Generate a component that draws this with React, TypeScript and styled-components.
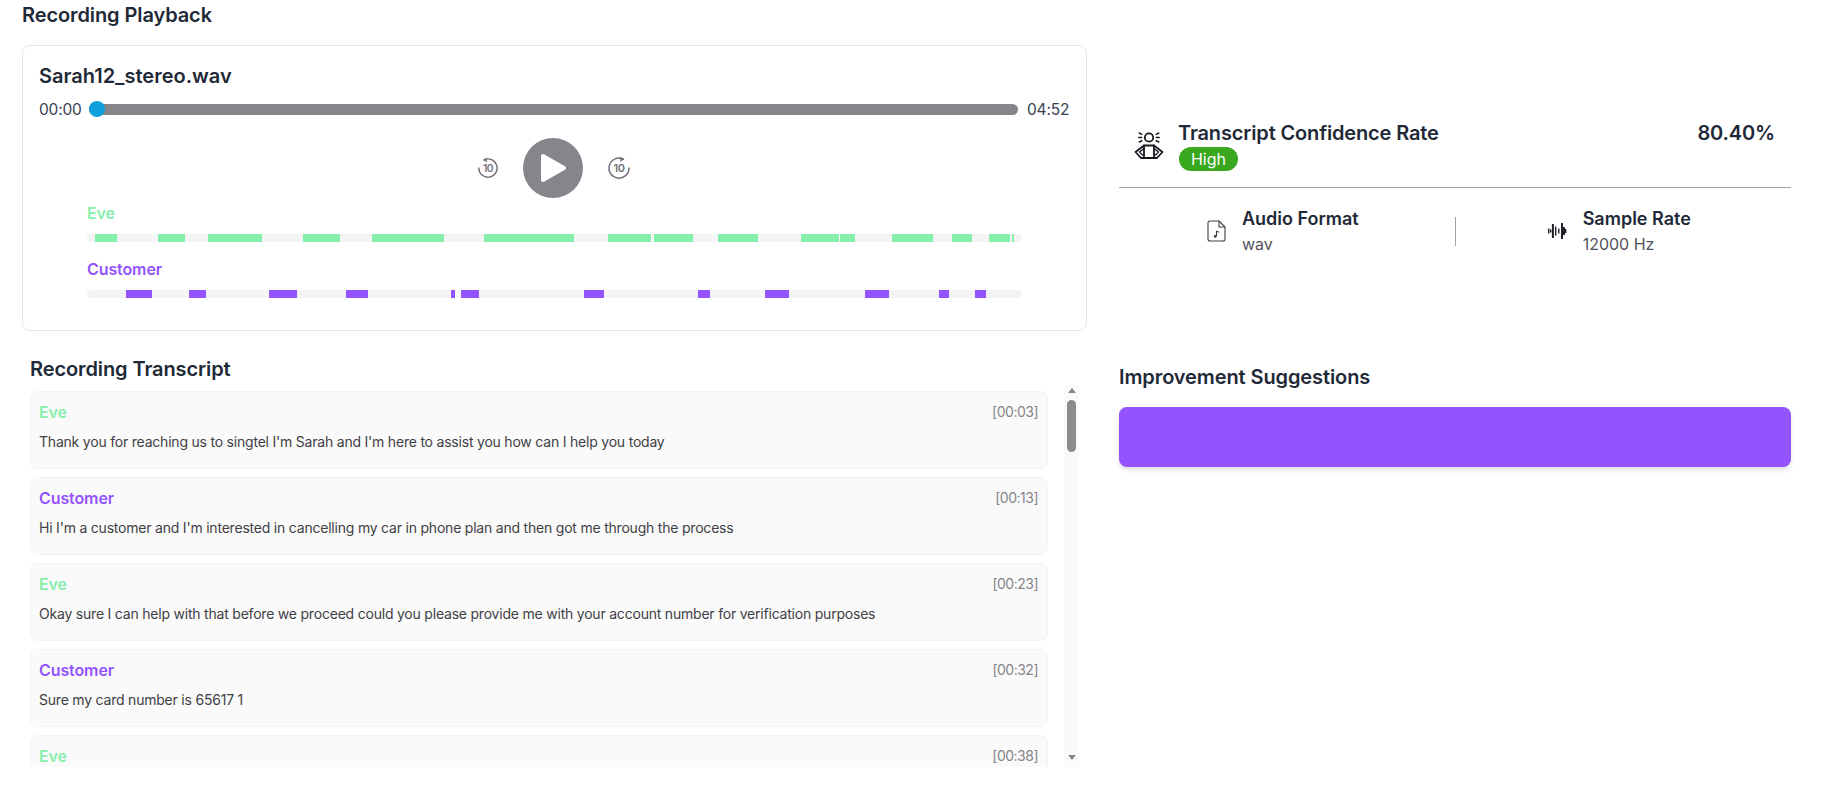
import styled, { createGlobalStyle } from "styled-components";

const TOTAL_START = 87;
const TRACK_WIDTH = 935;

// segments are in page pixels measured along the track, converted to % below
const eveSegments: [number, number][] = [
  [95, 117], [158, 185], [208, 262], [303, 340], [372, 444], [484, 574], [608, 651],
  [654, 693], [718, 758], [801, 839], [840, 855], [892, 933], [952, 972], [989, 1010], [1012, 1014],
];
const customerSegments: [number, number][] = [
  [126, 152], [189, 206], [269, 297], [346, 368], [451, 455], [461, 479],
  [584, 604], [698, 710], [765, 789], [865, 889], [939, 949], [975, 986],
];

type Speaker = "eve" | "customer";

const messages: { speaker: Speaker; time: string; text: string }[] = [
  { speaker: "eve", time: "[00:03]", text: "Thank you for reaching us to singtel I'm Sarah and I'm here to assist you how can I help you today" },
  { speaker: "customer", time: "[00:13]", text: "Hi I'm a customer and I'm interested in cancelling my car in phone plan and then got me through the process" },
  { speaker: "eve", time: "[00:23]", text: "Okay sure I can help with that before we proceed could you please provide me with your account number for verification purposes" },
  { speaker: "customer", time: "[00:32]", text: "Sure my card number is 65617 1" },
  { speaker: "eve", time: "[00:38]", text: "" },
];

const speakerColor = (s: Speaker) => (s === "eve" ? "#86efac" : "#9353ff");
const speakerName = (s: Speaker) => (s === "eve" ? "Eve" : "Customer");

const GlobalStyle = createGlobalStyle`
  html, body { margin: 0; padding: 0; background: #fff; }
  body { font-family: Inter, "Open Sans", sans-serif; color: #1f2937; }
  * { box-sizing: border-box; }
`;

const Page = styled.div`
  display: grid;
  grid-template-columns: 1065px 672px;
  column-gap: 32px;
  padding-left: 22px;
  height: 801px;
  overflow: hidden;
`;

const LeftColumn = styled.div`
  display: flex;
  flex-direction: column;
`;

const RightColumn = styled.div`
  display: flex;
  flex-direction: column;
  padding-top: 118px;
`;

const Heading = styled.h2`
  margin: 0;
  font-size: 20px;
  line-height: 30px;
  font-weight: 600;
  color: #1f2937;
  letter-spacing: -0.1px;
`;

const PlayerCard = styled.section`
  margin-top: 15px;
  height: 286px;
  padding: 16px 17px 16px 16px;
  border: 1px solid #e5e7eb;
  border-radius: 8px;
  background: #fff;
`;

const FileName = styled.div`
  font-size: 20px;
  line-height: 28px;
  font-weight: 600;
  color: #1f2937;
`;

const SeekRow = styled.div`
  display: flex;
  align-items: center;
  gap: 8px;
  margin-top: 8px;
  height: 22px;
  color: #374151;
`;

const Time = styled.span`
  width: 42px;
  white-space: nowrap;
  font-size: 15.5px;
  letter-spacing: -0.2px;
`;

const Slider = styled.div`
  position: relative;
  flex: 1;
  height: 11px;
  margin-right: 1px;
  background: #85858a;
  border-radius: 6px;
`;

const Thumb = styled.span`
  position: absolute;
  left: 0;
  top: -2.5px;
  width: 16px;
  height: 16px;
  border-radius: 50%;
  background: #0ea0dc;
`;

const Controls = styled.div`
  display: flex;
  justify-content: center;
  align-items: center;
  gap: 24px;
  margin-top: 18px;
  height: 60px;
`;

const SkipIcon = styled.svg<{ $size: number }>`
  width: ${(p) => p.$size}px;
  height: ${(p) => p.$size}px;
  display: block;
`;

const PlayButton = styled.button`
  width: 60px;
  height: 60px;
  padding: 0;
  border: 0;
  border-radius: 50%;
  background: #85868b;
  display: flex;
  align-items: center;
  justify-content: center;
`;

const Timelines = styled.div`
  margin: 3px 47px 0 48px;
`;

const TimelineLabel = styled.div<{ $speaker: Speaker }>`
  font-size: 16px;
  line-height: 24px;
  font-weight: 600;
  letter-spacing: -0.1px;
  color: ${(p) => speakerColor(p.$speaker)};
`;

const Track = styled.div`
  position: relative;
  height: 8px;
  margin: 9px 0 15px;
  background: #f4f4f5;
  border-radius: 4px;
  overflow: hidden;
`;

const Segment = styled.span<{ $speaker: Speaker }>`
  position: absolute;
  top: 0;
  bottom: 0;
  background: ${(p) => speakerColor(p.$speaker)};
`;

const TranscriptSection = styled.section`
  margin-top: 23px;
  padding: 0 8px;
  display: flex;
  flex-direction: column;
`;

const TranscriptBody = styled.div`
  display: flex;
  gap: 16px;
  height: 383px;
  overflow: hidden;
`;

const MessageList = styled.div`
  flex: 1;
  display: flex;
  flex-direction: column;
  gap: 8px;
  padding-top: 7px;
`;

const Message = styled.article`
  flex: none;
  height: 78px;
  padding: 8px 9px 16px 8px;
  background: #fafafa;
  border: 1px solid #f4f4f5;
  border-radius: 8px;
`;

const MessageHead = styled.div`
  display: flex;
  justify-content: space-between;
  align-items: center;
  height: 23px;
`;

const MessageSpeaker = styled.span<{ $speaker: Speaker }>`
  font-size: 16px;
  font-weight: 600;
  letter-spacing: -0.1px;
  color: ${(p) => speakerColor(p.$speaker)};
`;

const Stamp = styled.span`
  font-size: 14px;
  letter-spacing: -0.5px;
  color: #85858a;
`;

const MessageText = styled.p`
  margin: 9px 0 0;
  font-size: 14px;
  line-height: 20px;
  letter-spacing: -0.21px;
  color: #3f3f46;
`;

const ScrollRail = styled.div`
  flex: none;
  width: 15px;
  padding-top: 4px;
  background: #fafafa;
  display: flex;
  flex-direction: column;
  align-items: center;
`;

const ScrollArrow = styled.span<{ $down?: boolean }>`
  width: 0;
  height: 0;
  border-left: 4px solid transparent;
  border-right: 4px solid transparent;
  ${(p) => (p.$down ? "border-top: 5px solid #85858a; margin-top: auto; margin-bottom: 7px;" : "border-bottom: 5px solid #85858a;")}
`;

const ScrollThumb = styled.span`
  width: 9px;
  height: 52px;
  margin-top: 7px;
  border-radius: 5px;
  background: #8c8c8c;
`;

const ConfidenceRow = styled.div`
  display: flex;
  align-items: flex-start;
  gap: 14px;
  padding: 0 16px 16px 15px;
  border-bottom: 1px solid #a1a1aa;
`;

const ConfidenceIcon = styled.svg`
  flex: none;
  width: 30px;
  height: 30px;
  margin-top: 12px;
`;

const ConfidenceMain = styled.div`
  flex: 1;
`;

const ConfidenceTop = styled.div`
  display: flex;
  justify-content: space-between;
  height: 29px;
  align-items: center;
  font-size: 20px;
  font-weight: 600;
  letter-spacing: -0.15px;
  color: #1f2937;
`;

const Badge = styled.span`
  display: inline-block;
  height: 24px;
  width: 59px;
  margin-left: 1px;
  text-align: center;
  border-radius: 12px;
  background: #3aa81f;
  color: #fff;
  font-size: 16px;
  line-height: 24px;
`;

const InfoRow = styled.div`
  display: grid;
  grid-template-columns: 1fr 1px 1fr;
  align-items: center;
  padding-top: 18px;
`;

const InfoItem = styled.div`
  display: flex;
  justify-content: center;
  align-items: center;
  gap: 16px;
  padding-right: 8px;
`;

const InfoDivider = styled.span`
  width: 1px;
  height: 29px;
  background: #a1a1aa;
`;

const InfoIcon = styled.svg`
  flex: none;
  width: 19px;
  height: 22px;
`;

const InfoTitle = styled.div`
  font-size: 18px;
  line-height: 26px;
  font-weight: 600;
  color: #1f2937;
`;

const InfoValue = styled.div`
  font-size: 16px;
  line-height: 24px;
  color: #52525b;
`;

const SuggestionsHeading = styled(Heading)`
  margin-top: 106px;
`;

const SuggestionBanner = styled.div`
  margin-top: 15px;
  height: 60px;
  border-radius: 8px;
  background: #9353ff;
  box-shadow: 0 4px 6px -1px rgba(0, 0, 0, 0.1), 0 2px 4px -2px rgba(0, 0, 0, 0.1);
`;

function Skip({ size, forward }: { size: number; forward?: boolean }) {
  return (
    <SkipIcon $size={size} viewBox="0 0 24 24" fill="none" stroke="#6f6f75" strokeWidth="1.5">
      {forward ? (
        <>
          <path d="M16.5 3.2A10 10 0 1 0 22 12" strokeLinecap="round" />
          <path d="M13 1.2 16.8 3.2 13.4 5.4" fill="#6f6f75" strokeWidth="0.6" />
        </>
      ) : (
        <>
          <path d="M7.5 3.2A10 10 0 1 1 2 12" strokeLinecap="round" />
          <path d="M11 1.2 7.2 3.2 10.6 5.4" fill="#6f6f75" strokeWidth="0.6" />
        </>
      )}
      <text x="12" y="16" textAnchor="middle" fontSize="11" fontWeight="600" letterSpacing="-0.5" fontFamily="Inter, sans-serif" fill="#6f6f75" stroke="none">
        10
      </text>
    </SkipIcon>
  );
}

function Timeline({ speaker, segments }: { speaker: Speaker; segments: [number, number][] }) {
  return (
    <Track>
      {segments.map(([from, to]) => (
        <Segment
          key={from}
          $speaker={speaker}
          style={{
            left: `${((from - TOTAL_START) / TRACK_WIDTH) * 100}%`,
            width: `${((to - from) / TRACK_WIDTH) * 100}%`,
          }}
        />
      ))}
    </Track>
  );
}

export default function App() {
  return (
    <>
      <GlobalStyle />
      <Page>
        <LeftColumn>
          <Heading>Recording Playback</Heading>
          <PlayerCard>
            <FileName>Sarah12_stereo.wav</FileName>
            <SeekRow>
              <Time>00:00</Time>
              <Slider>
                <Thumb />
              </Slider>
              <Time>04:52</Time>
            </SeekRow>
            <Controls>
              <Skip size={22} />
              <PlayButton aria-label="Play">
                <svg width="30" height="32" viewBox="0 0 30 32">
                  <path d="M5 4 26 16 5 28Z" fill="#fff" stroke="#fff" strokeWidth="4" strokeLinejoin="round" />
                </svg>
              </PlayButton>
              <Skip size={24} forward />
            </Controls>
            <Timelines>
              <TimelineLabel $speaker="eve">Eve</TimelineLabel>
              <Timeline speaker="eve" segments={eveSegments} />
              <TimelineLabel $speaker="customer">Customer</TimelineLabel>
              <Timeline speaker="customer" segments={customerSegments} />
            </Timelines>
          </PlayerCard>

          <TranscriptSection>
            <Heading>Recording Transcript</Heading>
            <TranscriptBody>
              <MessageList>
                {messages.map((m) => (
                  <Message key={m.time}>
                    <MessageHead>
                      <MessageSpeaker $speaker={m.speaker}>{speakerName(m.speaker)}</MessageSpeaker>
                      <Stamp>{m.time}</Stamp>
                    </MessageHead>
                    {m.text && <MessageText>{m.text}</MessageText>}
                  </Message>
                ))}
              </MessageList>
              <ScrollRail>
                <ScrollArrow />
                <ScrollThumb />
                <ScrollArrow $down />
              </ScrollRail>
            </TranscriptBody>
          </TranscriptSection>
        </LeftColumn>

        <RightColumn>
          <ConfidenceRow>
            <ConfidenceIcon viewBox="0 0 30 30" fill="none" stroke="#15181d" strokeWidth="1.8" strokeLinecap="round" strokeLinejoin="round">
              <circle cx="15" cy="7.5" r="4.2" />
              <path d="M5.2 3 7.8 4.3M4.8 7.6H7.6M5.2 12 7.8 10.8M24.8 3 22.2 4.3M25.2 7.6H22.4M24.8 12 22.2 10.8" strokeWidth="1.5" />
              <path d="M10 28V15.5H20V28Z" />
              <path d="M10 15.5 1.5 22 7 28H10M20 15.5 28.5 22 23 28H20" />
              <path d="M10 18.5 5.5 22 8.5 25M20 18.5 24.5 22 21.5 25" strokeWidth="1.4" />
            </ConfidenceIcon>
            <ConfidenceMain>
              <ConfidenceTop>
                <span>Transcript Confidence Rate</span>
                <span>80.40%</span>
              </ConfidenceTop>
              <Badge>High</Badge>
            </ConfidenceMain>
          </ConfidenceRow>

          <InfoRow>
            <InfoItem>
              <InfoIcon viewBox="0 0 19 22" fill="none" stroke="#3f3f46" strokeWidth="1.1" strokeLinejoin="round">
                <path d="M3 1H12L18 7V19A2 2 0 0 1 16 21H3A2 2 0 0 1 1 19V3A2 2 0 0 1 3 1Z" />
                <path d="M12 1V7H18" />
                <path d="M9.5 11V16.2" strokeWidth="1.2" />
                <path d="M9.5 11 11.8 12.2" strokeWidth="1.2" />
                <circle cx="8.2" cy="16.4" r="1.4" fill="#3f3f46" stroke="none" />
              </InfoIcon>
              <div>
                <InfoTitle>Audio Format</InfoTitle>
                <InfoValue>wav</InfoValue>
              </div>
            </InfoItem>
            <InfoDivider />
            <InfoItem>
              <InfoIcon viewBox="0 0 19 22" fill="none" stroke="#1f2329" strokeWidth="1.4">
                <path d="M0.7 8.5V13.5M2.7 9.5V12.5M7.7 6.5V15.5M10.8 8.5V13.5M17.7 9V13" />
                <path d="M4.9 4V18M14 3V19M16 7V15" strokeWidth="2" />
              </InfoIcon>
              <div>
                <InfoTitle>Sample Rate</InfoTitle>
                <InfoValue>12000 Hz</InfoValue>
              </div>
            </InfoItem>
          </InfoRow>

          <SuggestionsHeading>Improvement Suggestions</SuggestionsHeading>
          <SuggestionBanner />
        </RightColumn>
      </Page>
    </>
  );
}
